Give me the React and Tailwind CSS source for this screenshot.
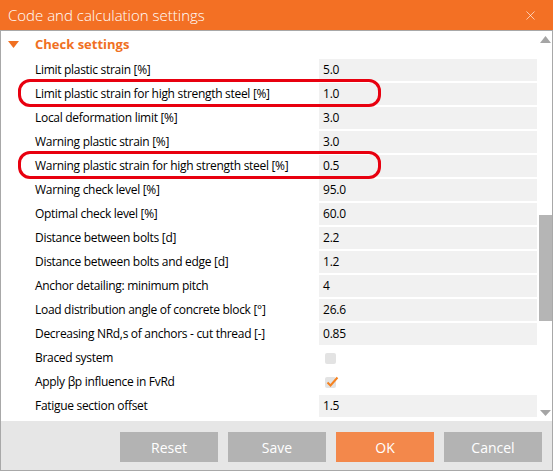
import { X } from "lucide-react";

const rows = [
  { label: "Limit plastic strain [%]", value: "5.0" },
  { label: "Limit plastic strain for high strength steel [%]", value: "1.0" },
  { label: "Local deformation limit [%]", value: "3.0" },
  { label: "Warning plastic strain [%]", value: "3.0" },
  { label: "Warning plastic strain for high strength steel [%]", value: "0.5" },
  { label: "Warning check level [%]", value: "95.0" },
  { label: "Optimal check level [%]", value: "60.0" },
  { label: "Distance between bolts [d]", value: "2.2" },
  { label: "Distance between bolts and edge [d]", value: "1.2" },
  { label: "Anchor detailing: minimum pitch", value: "4" },
  { label: "Load distribution angle of concrete block [°]", value: "26.6" },
  { label: "Decreasing NRd,s of anchors - cut thread [-]", value: "0.85" },
  { label: "Braced system", check: false },
  { label: "Apply βp influence in FvRd", check: true },
  { label: "Fatigue section offset", value: "1.5" },
];

function Checkbox({ checked }) {
  return (
    <div className="relative ml-[6px] w-[11px] h-[11px] rounded-[2px] bg-[#e3e3e3]">
      {checked && (
        <svg
          className="absolute left-[1px] top-[-1px]"
          width="13"
          height="12"
          viewBox="0 0 13 12"
        >
          <path
            d="M1.5 6.5 L4.5 9.5 L11.5 1.5"
            fill="none"
            stroke="#f58220"
            strokeWidth="2"
          />
        </svg>
      )}
    </div>
  );
}

function Row({ row }) {
  return (
    <div className="flex h-[24px] items-center">
      <div className="w-[318px] pl-[34px] text-[12px] tracking-[-0.3px] text-black whitespace-nowrap">
        {row.label}
      </div>
      {row.value !== undefined ? (
        <div className="flex-1 mr-[2px] h-[22px] bg-[#f1f1f1] pl-[4px] flex items-center text-[12px] tracking-[-0.2px] text-black">
          {row.value}
        </div>
      ) : (
        <div className="flex-1 mr-[2px] h-[22px] flex items-center">
          <Checkbox checked={row.check} />
        </div>
      )}
    </div>
  );
}

export default function App() {
  return (
    <div
      className="w-[553px] h-[471px] flex flex-col bg-white overflow-hidden"
      style={{ fontFamily: '"Open Sans", "Noto Sans", sans-serif' }}
    >
      {/* title bar */}
      <div className="h-[30px] shrink-0 bg-[#f37024] flex items-center justify-between pl-[8px] pr-[15px]">
        <span className="text-white text-[15px] font-light">
          Code and calculation settings
        </span>
        <X size={15} strokeWidth={1} color="#ffffff" />
      </div>

      {/* body */}
      <div className="flex-1 flex border-t border-l border-r border-[#a8a8a8] overflow-hidden relative">
        <div className="flex-1 flex flex-col">
          <div className="h-[27px] shrink-0 flex items-center">
            <svg className="ml-[7px]" width="11" height="8" viewBox="0 0 11 8">
              <path d="M0 0 L11 0 L5.5 7 Z" fill="#f07022" />
            </svg>
            <span className="ml-[16px] text-[13px] font-bold text-[#f07022]">
              Check settings
            </span>
          </div>
          {rows.map((r) => (
            <Row key={r.label} row={r} />
          ))}
        </div>

        {/* scrollbar */}
        <div className="w-[13px] shrink-0 flex flex-col items-center">
          <svg className="mt-[5px]" width="11" height="7" viewBox="0 0 11 7">
            <path d="M0 7 L11 7 L5.5 0 Z" fill="#a5a5a5" />
          </svg>
          <div className="mt-[172px] w-[13px] h-[106px] bg-[#b5b5b5]" />
          <div className="flex-1" />
          <svg className="mb-[5px]" width="11" height="6" viewBox="0 0 11 6">
            <path d="M0 0 L11 0 L5.5 6 Z" fill="#a5a5a5" />
          </svg>
        </div>

        {/* highlight marks */}
        <div className="absolute left-[17px] top-[48px] w-[363px] h-[28px] rounded-[12px] border-[3px] border-[#e8000f]" />
        <div className="absolute left-[17px] top-[120px] w-[363px] h-[28px] rounded-[12px] border-[3px] border-[#e8000f]" />
      </div>

      {/* footer */}
      <div className="h-[50px] shrink-0 bg-[#e6e6e6] border-l border-r border-b border-[#a8a8a8] flex justify-end items-start pt-[11px] pr-[10px] gap-[10px]">
        <button className="w-[98px] h-[30px] bg-[#b3b3b3] text-white text-[14px]">
          Reset
        </button>
        <button className="w-[98px] h-[30px] bg-[#b3b3b3] text-white text-[14px]">
          Save
        </button>
        <button className="w-[98px] h-[30px] bg-[#f3884b] text-white text-[14px]">
          OK
        </button>
        <button className="w-[98px] h-[30px] bg-[#b3b3b3] text-white text-[14px]">
          Cancel
        </button>
      </div>
    </div>
  );
}
